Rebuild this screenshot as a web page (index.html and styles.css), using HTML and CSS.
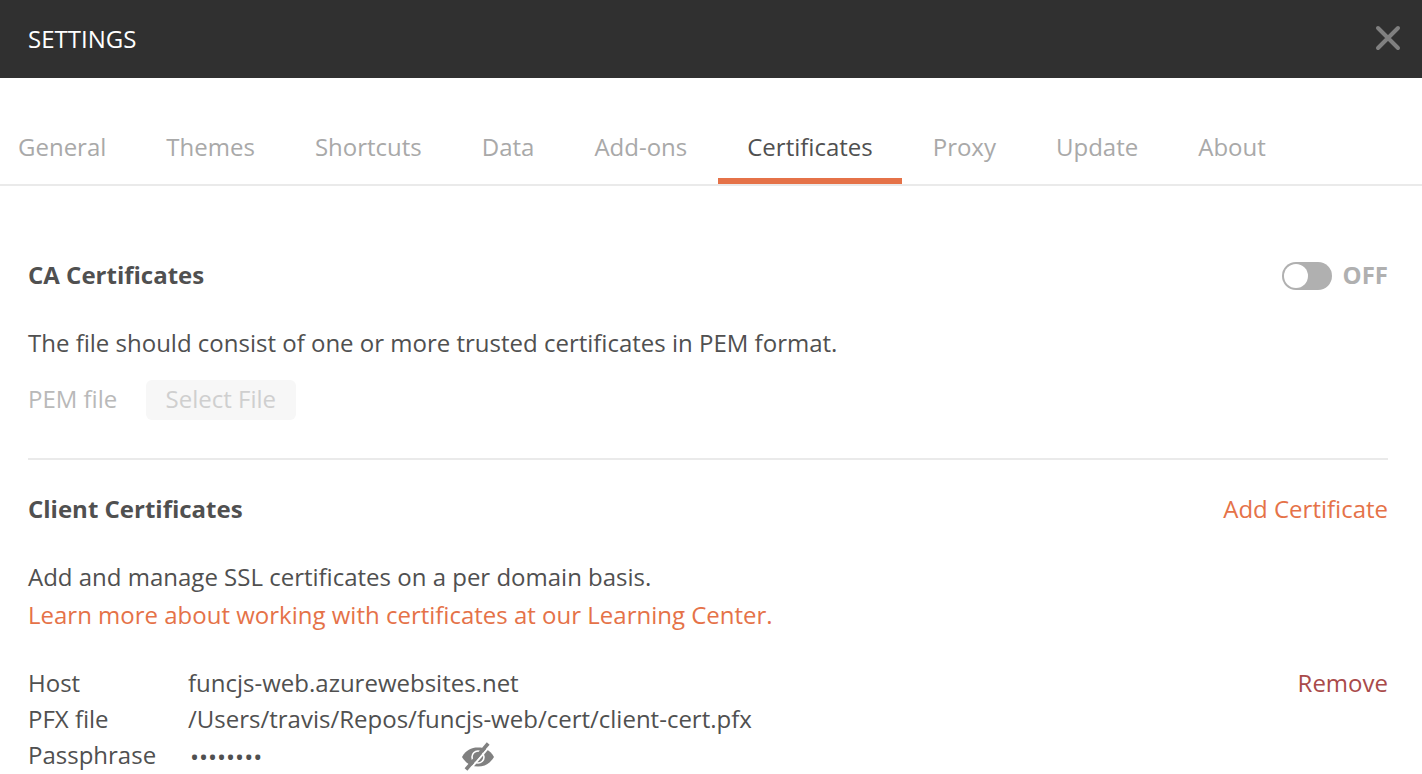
FILE: index.html
```html
<!DOCTYPE html>
<html lang="en">
<head>
<meta charset="utf-8">
<title>Settings</title>
<link rel="stylesheet" href="styles.css">
</head>
<body>
<header class="header">
  <h1 class="title">SETTINGS</h1>
  <svg class="close" width="26" height="26" viewBox="0 0 26 26"><path d="M3 3L23 23M23 3L3 23"/></svg>
</header>
<nav class="tabs">
  <a class="tab">General</a>
  <a class="tab">Themes</a>
  <a class="tab">Shortcuts</a>
  <a class="tab">Data</a>
  <a class="tab">Add-ons</a>
  <a class="tab active">Certificates</a>
  <a class="tab">Proxy</a>
  <a class="tab">Update</a>
  <a class="tab">About</a>
</nav>
<main class="content">
  <section class="ca">
    <div class="row">
      <h2 class="heading">CA Certificates</h2>
      <div class="switch"><span class="track"><span class="knob"></span></span><span class="state">OFF</span></div>
    </div>
    <p class="text">The file should consist of one or more trusted certificates in PEM format.</p>
    <div class="pem"><span class="pem-label">PEM file</span><button class="select">Select File</button></div>
  </section>
  <section class="client">
    <div class="row">
      <h2 class="heading">Client Certificates</h2>
      <a class="link add">Add Certificate</a>
    </div>
    <p class="text">Add and manage SSL certificates on a per domain basis.</p>
    <p class="learn"><a class="link">Learn more about working with certificates at our Learning Center.</a></p>
    <div class="row cert">
      <dl class="details">
        <dt>Host</dt><dd>funcjs-web.azurewebsites.net</dd>
        <dt>PFX file</dt><dd>/Users/travis/Repos/funcjs-web/cert/client-cert.pfx</dd>
        <dt>Passphrase</dt>
        <dd class="secret"><span class="dots">••••••••</span>
          <svg class="eye" width="32" height="30" viewBox="0 0 32 30"><path class="shape" d="M0 15C4 8 9 5.5 16 5.5S28 8 32 15C28 21.5 23 24.5 16 24.5S4 21.5 0 15Z"/><circle class="ring" cx="16" cy="15" r="6"/><circle class="iris" cx="16.5" cy="15" r="3.6"/><path class="gap" d="M6.5 29.2L28.7 3.2"/><path class="slash" d="M4 27.5L26.2 1.5"/></svg>
        </dd>
      </dl>
      <a class="remove">Remove</a>
    </div>
  </section>
</main>
</body>
</html>
```
FILE: styles.css
```css
* { box-sizing: border-box; }
body { margin: 0; height: 774px; overflow: hidden; background: #fff; color: #505050; font: 24px/36px "Open Sans", sans-serif; }
h1, h2, p, dl, dd { margin: 0; }
.header { display: flex; align-items: center; justify-content: space-between; height: 78px; padding: 0 21px 0 28px; background: #303030; }
.title { color: #fff; font-size: 24px; font-weight: 400; }
.close { margin-bottom: 2px; fill: none; stroke: #808080; stroke-width: 4; stroke-linecap: round; }
.tabs { display: flex; height: 108px; padding-top: 42px; border-bottom: 2px solid #eaeaea; }
.tab { height: 64px; padding: 9px 30px 0; color: #a9a9a9; }
.tab:first-child { padding-left: 18px; }
.tab.active { margin: 0 .6px; padding: 9px 29.4px 0; color: #505050; border-bottom: 6px solid #e57248; }
.content { padding: 71px 34px 0 28px; }
.row { display: flex; justify-content: space-between; }
.heading { font-size: 24px; font-weight: 700; line-height: 36px; }
.ca { height: 203px; border-bottom: 2px solid #eaeaea; }
.switch { display: flex; align-items: center; gap: 11px; color: #b0b0b0; font-weight: 700; }
.track { width: 50px; height: 28px; margin-top: 2px; padding: 2px; border-radius: 14px; background: #b0b0b0; }
.knob { display: block; width: 24px; height: 24px; border-radius: 50%; background: #fff; }
.text { margin-top: 32px; }
.pem { display: flex; align-items: flex-start; gap: 29px; margin-top: 19px; color: #b9b9b9; }
.pem-label { line-height: 38px; }
.select { width: 150px; height: 40px; padding: 0 1px 2px 0; border: 0; border-radius: 6px; background: #f7f7f7; color: #cfcfcf; font: inherit; }
.client { padding-top: 31px; }
.link { color: #e57248; }
.learn { margin-top: 2px; }
.cert { margin-top: 32px; }
.details { display: grid; grid-template-columns: 160px auto; }
.secret { display: flex; align-items: center; height: 36px; padding-top: 3px; }
.dots { width: 272px; margin-left: 2px; }
.remove { color: #a94a4a; }
.eye { fill: #808080; }
.ring { fill: none; stroke: #fff; stroke-width: 1.6; }
.gap { stroke: #fff; stroke-width: 2; }
.slash { stroke: #808080; stroke-width: 3.6; }
```
